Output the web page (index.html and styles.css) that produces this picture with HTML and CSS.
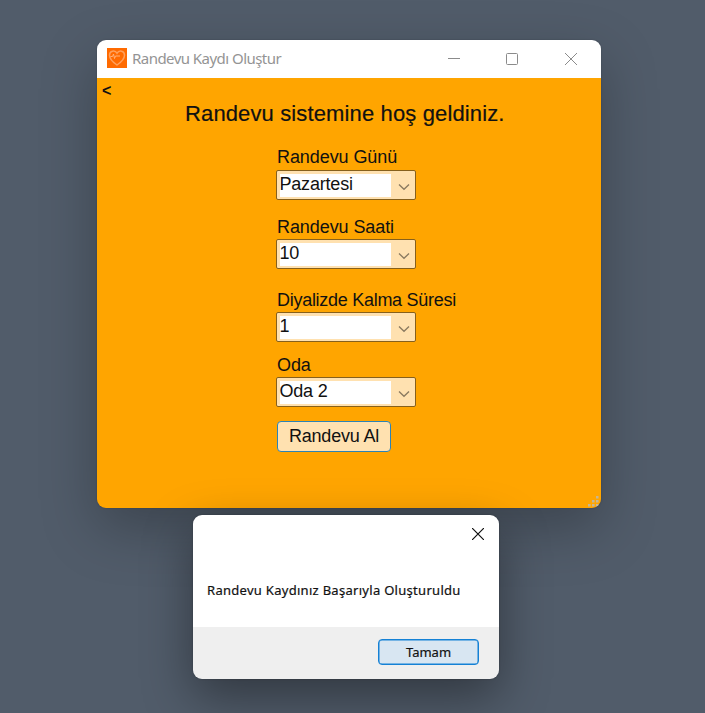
FILE: index.html
```html
<!DOCTYPE html>
<html lang="tr">
<head>
<meta charset="utf-8">
<title>Randevu Kaydı Oluştur</title>
<link rel="stylesheet" href="styles.css">
</head>
<body>
<main class="desktop">
  <section class="window">
    <header class="titlebar">
      <svg class="app-icon" width="20" height="20" viewBox="0 0 20 20"><rect width="20" height="20" fill="#ff6a00"/><path d="M10 17C5 13.500 2.500 10.500 2.500 7.200C2.500 2.500 8 1.800 10 5.200C12 1.800 17.500 2.500 17.500 7.200C17.500 10.500 15 13.500 10 17Z" fill="none" stroke="#ffa05c" stroke-width="1.500"/><path d="M3.500 8.500H5.500L6.500 6L7.500 10.500L8.500 8H13" fill="none" stroke="#ffb17a" stroke-width="1"/></svg>
      <span class="title">Randevu Kaydı Oluştur</span>
      <span class="controls">
        <svg width="12" height="12" viewBox="0 0 12 12"><path d="M0 5.500H12"/></svg>
        <svg width="12" height="12" viewBox="0 0 12 12"><rect x=".5" y=".5" width="11" height="11" rx="1"/></svg>
        <svg width="12" height="12" viewBox="0 0 12 12"><path d="M0 0L12 12M12 0L0 12"/></svg>
      </span>
    </header>
    <div class="client">
      <span class="back">&lt;</span>
      <h1 class="heading">Randevu sistemine hoş geldiniz.</h1>
      <form class="form">
        <div class="field day"><label class="label">Randevu Günü</label>
          <div class="combo"><span class="value">Pazartesi</span><svg class="chevron" width="12" height="8" viewBox="0 0 12 8"><path d="M1 1.500L6 6.300L11 1.500"/></svg></div></div>
        <div class="field hour"><label class="label">Randevu Saati</label>
          <div class="combo"><span class="value">10</span><svg class="chevron" width="12" height="8" viewBox="0 0 12 8"><path d="M1 1.500L6 6.300L11 1.500"/></svg></div></div>
        <div class="field duration"><label class="label">Diyalizde Kalma Süresi</label>
          <div class="combo"><span class="value">1</span><svg class="chevron" width="12" height="8" viewBox="0 0 12 8"><path d="M1 1.500L6 6.300L11 1.500"/></svg></div></div>
        <div class="field room"><label class="label">Oda</label>
          <div class="combo"><span class="value">Oda 2</span><svg class="chevron" width="12" height="8" viewBox="0 0 12 8"><path d="M1 1.500L6 6.300L11 1.500"/></svg></div></div>
        <button class="submit" type="button">Randevu Al</button>
      </form>
      <svg class="grip" width="11" height="11" viewBox="0 0 11 11"><path d="M8 0h2.500v2.500h-2.500zM4 4h2.500v2.500h-2.500zM8 4h2.500v2.500h-2.500zM0 8h2.500v2.500h-2.500zM4 8h2.500v2.500h-2.500zM8 8h2.500v2.500h-2.500z"/></svg>
    </div>
  </section>
  <section class="dialog">
    <div class="dialog-body">
      <svg class="close" width="12" height="12" viewBox="0 0 12 12"><path d="M0 0L12 12M12 0L0 12"/></svg>
      <p class="message">Randevu Kaydınız Başarıyla Oluşturuldu</p>
    </div>
    <footer class="dialog-footer"><button class="ok" type="button">Tamam</button></footer>
  </section>
</main>
</body>
</html>
```
FILE: styles.css
```css
* { box-sizing: border-box; }
body { margin: 0; }
.desktop {
  position: relative;
  width: 705px;
  height: 713px;
  overflow: hidden;
  background: #515c6a;
  font-family: "Liberation Sans", sans-serif;
  color: #111;
}
.window {
  position: absolute;
  left: 97px;
  top: 40px;
  width: 504px;
  height: 468px;
  border-radius: 9px;
  overflow: hidden;
  box-shadow: 0 20px 56px rgba(0, 0, 0, .26), 0 0 2px rgba(0, 0, 0, .2);
}
.titlebar {
  display: flex;
  align-items: center;
  height: 38px;
  padding: 0 24px 0 10px;
  background: #fff;
}
.app-icon { margin-top: -2px; }
.title {
  margin: -2px 0 0 5px;
  font: 15px/20px "Noto Sans", sans-serif;
  letter-spacing: -.54px;
  color: #949494;
  white-space: nowrap;
}
.controls { display: flex; margin-left: auto; }
.controls svg { margin-left: 46px; fill: none; stroke: #8b8b8b; }
.controls svg:last-child { margin-left: 47px; }
.client {
  position: relative;
  height: 430px;
  background: #ffa500;
  overflow: hidden;
}
.back {
  display: block;
  height: 20px;
  padding: 4px 0 0 5px;
  font-size: 16px;
  line-height: 18px;
  font-weight: bold;
}
.heading {
  margin: 0 0 0 88px;
  padding-top: 3px;
  font-size: 22px;
  line-height: 26px;
  font-weight: normal;
  letter-spacing: .13px;
  -webkit-text-stroke: .2px #111;
  white-space: nowrap;
}
.form { padding: 18px 0 0 179px; }
.field { height: 70px; padding-top: 2px; }
.label {
  display: block;
  height: 23px;
  padding-left: 1px;
  font-size: 18px;
  line-height: 20px;
  letter-spacing: -.08px;
  white-space: nowrap;
}
.hour { height: 73px; }
.hour .label { height: 22px; }
.duration { height: 66px; }
.duration .label { height: 22px; letter-spacing: -.28px; }
.room { height: 67px; padding-top: 1px; }
.room .label { height: 22px; line-height: 21px; }
.combo {
  display: flex;
  align-items: center;
  width: 140px;
  height: 30px;
  padding: 3px 5px 3px 3px;
  border: 1px solid #86601c;
  border-radius: 2px;
  background: #ffe1b0;
}
.value {
  width: 111px;
  height: 23px;
  background: #fff;
  font-size: 18px;
  line-height: 20px;
  letter-spacing: -.2px;
  text-indent: -.5px;
}
.chevron { margin: 3px 0 0 auto; fill: none; stroke: #8a7a60; stroke-width: 1.3; }
.submit {
  display: block;
  width: 114px;
  height: 31px;
  margin-left: 1px;
  padding: 0;
  border: 1px solid #2c83b5;
  border-radius: 4px;
  background: #ffe1b0;
  font: 18px/27px "Liberation Sans", sans-serif;
  letter-spacing: -.2px;
  color: #111;
}
.grip { position: absolute; right: 2px; bottom: 1px; fill: #c4b698; }
.dialog {
  position: absolute;
  left: 193px;
  top: 515px;
  width: 306px;
  height: 164px;
  border-radius: 9px;
  overflow: hidden;
  box-shadow: 0 18px 50px rgba(0, 0, 0, .4), 0 0 2px rgba(0, 0, 0, .25);
}
.dialog-body {
  display: flex;
  flex-direction: column;
  height: 112px;
  padding: 13px 15px 0 14px;
  background: #fff;
}
.close { align-self: flex-end; fill: none; stroke: #111; stroke-width: 1.2; }
.message {
  margin: 40px 0 0;
  font: 13px/20px "Noto Sans", sans-serif;
  letter-spacing: .29px;
  -webkit-text-stroke: .2px #111;
  white-space: nowrap;
}
.dialog-footer {
  display: flex;
  justify-content: flex-end;
  height: 52px;
  padding: 12px 20px 0 0;
  background: #efefef;
}
.ok {
  width: 101px;
  height: 26px;
  padding: 0;
  border: 1px solid #1581d5;
  border-radius: 4px;
  background: #d8e6f2;
  box-shadow: inset 0 0 0 .5px #1581d5;
  font: 13px/22px "Noto Sans", sans-serif;
  -webkit-text-stroke: .2px #111;
  color: #111;
}
```
